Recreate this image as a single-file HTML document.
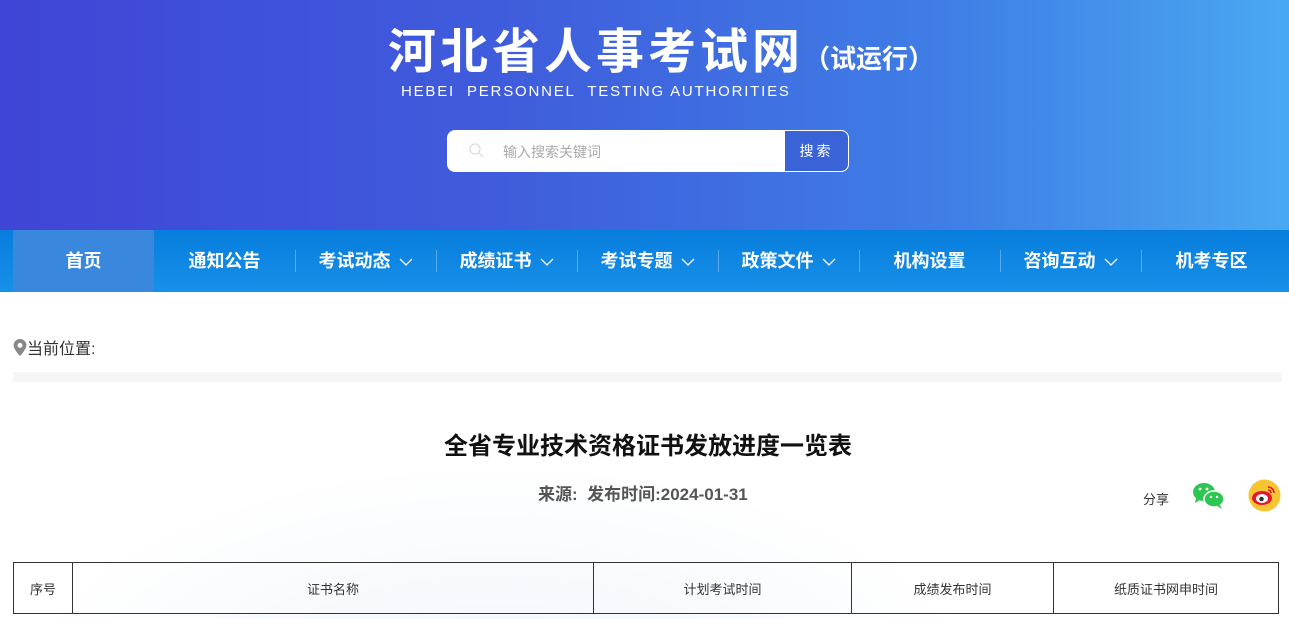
<!DOCTYPE html>
<html><head><meta charset="utf-8"><style>
*{margin:0;padding:0;box-sizing:border-box}
body{width:1289px;height:619px;overflow:hidden;background:#fff;font-family:"Liberation Sans","Noto Sans CJK SC",sans-serif;position:relative}
.hdr{position:absolute;left:0;top:0;width:1289px;height:230px;background:linear-gradient(90deg,#3f45d6 0%,#3f5ddc 40%,#3f80e6 75%,#4aa8f2 100%)}
.t1{position:absolute;left:388px;top:12px;color:#fff;font-size:48px;font-weight:bold;letter-spacing:4px;white-space:nowrap}
.t1 span{font-size:26px;letter-spacing:0;font-weight:bold}
.t2{position:absolute;left:401px;top:83px;color:#fff;font-size:15px;letter-spacing:1.8px;white-space:nowrap}
.sb{position:absolute;left:447px;top:130px;width:402px;height:42px;background:#fff;border-radius:8px}
.sb .ph{position:absolute;left:56px;top:12px;font-size:14px;color:#aaa}
.sb .btn{position:absolute;right:0;top:0;width:65px;height:42px;background:#3a63d8;border:1px solid #fff;border-radius:0 8px 8px 0;color:#fff;font-size:14px;text-align:center;line-height:40px;letter-spacing:3px}
.nav{position:absolute;left:0;top:230px;width:1289px;height:62px;background:linear-gradient(180deg,#077ddd,#1690e8)}
.nav .it{position:absolute;top:0;height:62px;line-height:62px;color:#fff;font-size:18px;font-weight:bold;text-align:center;width:141px}
.nav .it svg{vertical-align:1px;margin-left:8px}
.nav .sep{position:absolute;top:20px;width:1px;height:22px;background:rgba(255,255,255,.3)}
.bg{position:absolute;left:0;top:292px;width:1289px;height:327px;background:radial-gradient(ellipse 500px 250px at 500px 420px,#eef4fb 0%,#fff 100%)}
.loc{position:absolute;left:13px;top:335px;font-size:16px;color:#333}
.bar{position:absolute;left:13px;top:372px;width:1269px;height:10px;background:#f6f6f6}
.title{position:absolute;left:0;width:1296px;top:426px;text-align:center;font-size:24px;font-weight:bold;color:#111}
.src{position:absolute;left:538px;top:480px;font-size:17px;font-weight:bold;color:#555}
table{position:absolute;left:13px;top:562px;border-collapse:collapse;width:1266px;font-size:13px;color:#333}
td{border:1px solid #333;height:51px;text-align:center}
</style></head><body>
<div class="hdr"></div>
<div class="t1">河北省人事考试网<span>（试运行）</span></div>
<div class="t2">HEBEI&nbsp; PERSONNEL&nbsp; TESTING AUTHORITIES</div>
<div class="sb"><svg style="position:absolute;left:22px;top:13px" width="15" height="15" viewBox="0 0 15 15"><circle cx="6" cy="6" r="5" fill="none" stroke="#ddd" stroke-width="1.3"/><path d="M10 10l4 4" stroke="#ddd" stroke-width="1.3"/></svg><div class="ph">输入搜索关键词</div><div class="btn">搜索</div></div>
<div class="nav">
<div class="it" style="left:13px;background:#3a88de">首页</div>
<div class="it" style="left:154px">通知公告</div><div class="sep" style="left:295px"></div>
<div class="it" style="left:295px">考试动态<svg width="14" height="8" viewBox="0 0 14 8"><path d="M1 1l6 6 6-6" stroke="#fff" fill="none" stroke-width="1.3"/></svg></div><div class="sep" style="left:436px"></div>
<div class="it" style="left:436px">成绩证书<svg width="14" height="8" viewBox="0 0 14 8"><path d="M1 1l6 6 6-6" stroke="#fff" fill="none" stroke-width="1.3"/></svg></div><div class="sep" style="left:577px"></div>
<div class="it" style="left:577px">考试专题<svg width="14" height="8" viewBox="0 0 14 8"><path d="M1 1l6 6 6-6" stroke="#fff" fill="none" stroke-width="1.3"/></svg></div><div class="sep" style="left:718px"></div>
<div class="it" style="left:718px">政策文件<svg width="14" height="8" viewBox="0 0 14 8"><path d="M1 1l6 6 6-6" stroke="#fff" fill="none" stroke-width="1.3"/></svg></div><div class="sep" style="left:859px"></div>
<div class="it" style="left:859px">机构设置</div><div class="sep" style="left:1000px"></div>
<div class="it" style="left:1000px">咨询互动<svg width="14" height="8" viewBox="0 0 14 8"><path d="M1 1l6 6 6-6" stroke="#fff" fill="none" stroke-width="1.3"/></svg></div><div class="sep" style="left:1141px"></div>
<div class="it" style="left:1141px">机考专区</div>
</div>
<div class="bg"></div>
<div class="loc"><svg width="14" height="17" viewBox="0 0 12 16" style="vertical-align:-2px"><path d="M6 0C2.7 0 0 2.6 0 5.9 0 10 6 16 6 16s6-6 6-10.1C12 2.6 9.3 0 6 0z" fill="#888"/><circle cx="6" cy="6" r="2.3" fill="#fff"/></svg>当前位置:</div>
<div class="bar"></div>
<div class="title">全省专业技术资格证书发放进度一览表</div>
<div class="src">来源:&nbsp; 发布时间:2024-01-31</div>
<div style="position:absolute;left:1143px;top:489px;font-size:13px;color:#333">分享</div>
<svg style="position:absolute;left:1192px;top:481px" width="34" height="30" viewBox="0 0 34 30"><ellipse cx="12" cy="11" rx="11" ry="9" fill="#2dc653"/><path d="M4 17l-1 5 5-3z" fill="#2dc653"/><ellipse cx="22" cy="18" rx="10" ry="8" fill="#2dc653" stroke="#fff" stroke-width="1.5"/><path d="M28 24l2 4-5-3z" fill="#2dc653"/><circle cx="8" cy="8" r="1.4" fill="#fff"/><circle cx="15" cy="8" r="1.4" fill="#fff"/><circle cx="19" cy="16" r="1.2" fill="#fff"/><circle cx="25" cy="16" r="1.2" fill="#fff"/></svg>
<svg style="position:absolute;left:1248px;top:479px" width="33" height="33" viewBox="0 0 33 33"><circle cx="16.5" cy="16.5" r="16" fill="#f7c531"/><ellipse cx="14" cy="19" rx="10" ry="7" fill="#e6162d"/><ellipse cx="14" cy="19.5" rx="6" ry="4.5" fill="#fff"/><circle cx="13.5" cy="20" r="2.3" fill="#333"/><path d="M20 8a6 6 0 0 1 6 6M20 11a3 3 0 0 1 3 3" stroke="#e6162d" stroke-width="1.6" fill="none"/></svg>
<table><tr><td style="width:59px">序号</td><td style="width:521px">证书名称</td><td style="width:258px">计划考试时间</td><td style="width:202px">成绩发布时间</td><td>纸质证书网申时间</td></tr></table>
</body></html>
